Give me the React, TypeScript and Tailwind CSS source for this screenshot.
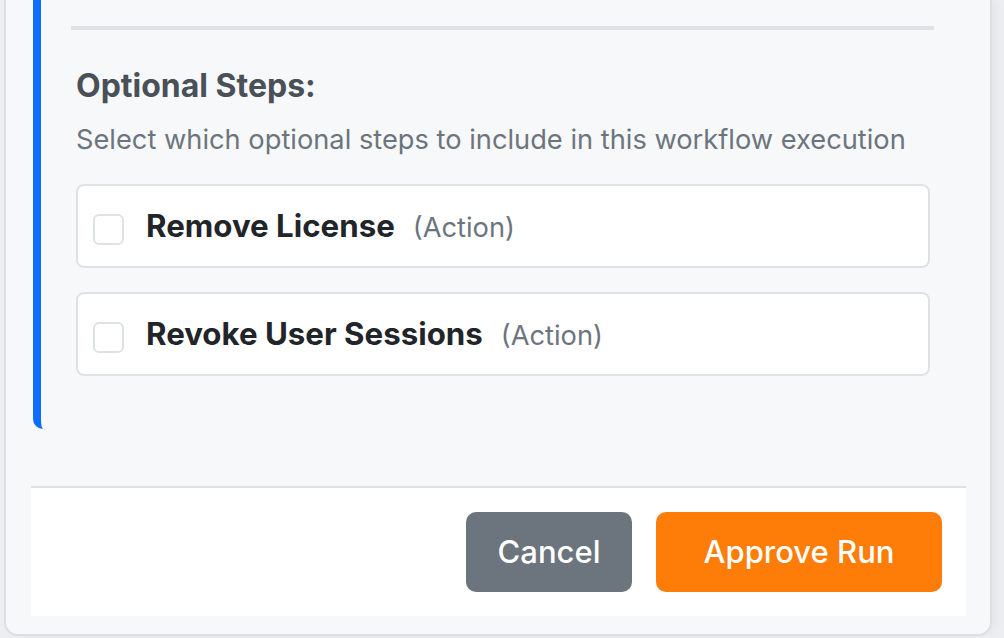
import { useState } from "react";

const steps = [
  { id: "remove-license", name: "Remove License", type: "Action" },
  { id: "revoke-sessions", name: "Revoke User Sessions", type: "Action" },
];

const App = () => {
  const [checked, setChecked] = useState<Record<string, boolean>>({});

  return (
    <div className="w-[1004px] h-[638px] overflow-hidden bg-[#eceef1] font-['Inter',sans-serif]">
      {/* Modal panel */}
      <div className="ml-[4px] w-[988px] h-[636px] flex flex-col bg-[#f7f8fa] border-x-2 border-b-2 border-[#dcdfe4] rounded-b-[14px] pl-[25px] pr-[24px] shadow-[4px_0_10px_rgba(0,0,0,0.04)]">
        {/* Step card */}
        <div className="ml-[2px] border-l-[8px] border-[#0d6efd] rounded-bl-[10px] pl-[30px] pr-[32px] pt-[26px] pb-[53px]">
          <div className="h-[4px] bg-[#dfe1e5]" />

          <div className="ml-[5px] mr-[4px]">
            <h6 className="mt-[37px] text-[32px] leading-[38px] font-bold text-[#495057]">Optional Steps:</h6>
            <p className="mt-[17px] text-[27.25px] leading-[36px] text-[#6c757d]">
              Select which optional steps to include in this workflow execution
            </p>

            <div className="mt-[26px] flex flex-col gap-[24px]">
              {steps.map((step) => (
                <label
                  key={step.id}
                  className="h-[84px] flex items-center bg-white border-2 border-[#dee2e6] rounded-[8px] pl-[15px] pr-[16px] cursor-pointer"
                >
                  <input
                    type="checkbox"
                    className="sr-only"
                    checked={!!checked[step.id]}
                    onChange={(e) => setChecked({ ...checked, [step.id]: e.target.checked })}
                  />
                  <span className="w-[31px] h-[31px] mt-[7px] rounded-[6px] border-2 border-[#dee2e6] bg-white" />
                  <span className="ml-[22px] text-[31.25px] leading-[40px] font-bold text-[#212529]">{step.name}</span>
                  <span className="ml-[18px] mt-[3px] text-[27.25px] leading-[34px] text-[#6c757d]">({step.type})</span>
                </label>
              ))}
            </div>
          </div>
        </div>

        {/* Footer */}
        <div className="mt-[57px] h-[130px] flex justify-end items-center gap-[24px] bg-white border-t-2 border-[#dee2e6] pr-[24px]">
          <button className="w-[166px] h-[80px] rounded-[10px] bg-[#6c757d] text-white text-[31px] font-medium">
            Cancel
          </button>
          <button className="w-[286px] h-[80px] rounded-[10px] bg-[#fe7d08] text-white text-[31px] font-medium">
            Approve Run
          </button>
        </div>
      </div>
    </div>
  );
};

export default App;
